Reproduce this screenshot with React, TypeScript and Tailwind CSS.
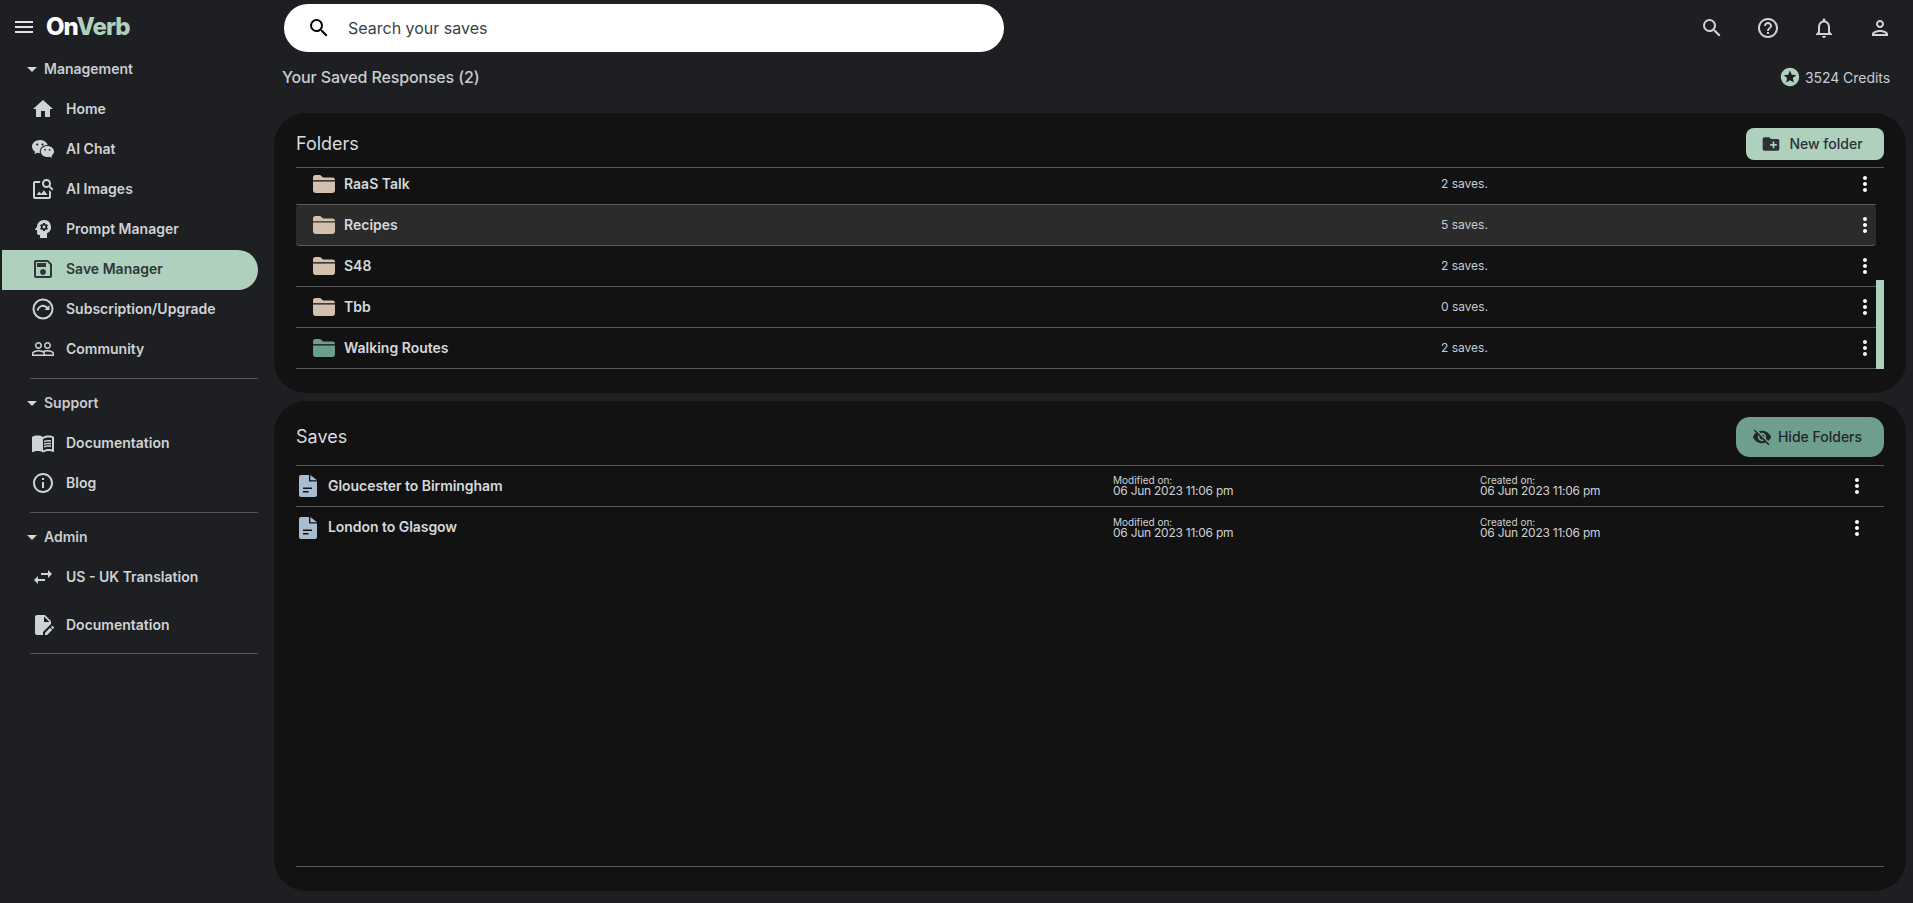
import React from 'react'
import {
  MdMenu, MdHome, MdOutlineImageSearch, MdPsychology, MdOutlineSave, MdPeopleOutline, MdMenuBook,
  MdInfoOutline, MdSwapHoriz, MdEditDocument, MdArrowDropDown, MdSearch, MdHelpOutline, MdOutlineNotifications,
  MdOutlinePerson, MdStars, MdCreateNewFolder, MdVisibilityOff, MdMoreVert,
} from 'react-icons/md'
import { RiWechatFill } from 'react-icons/ri'

const FolderIcon = ({ className }: { className: string }) => (
  <svg viewBox="0 0 22 18" className={className} fill="currentColor">
    <path d="M0 5.200V2.500A2.500 2.500 0 0 1 2.500 0h4.700l2.900 2.600h9.400A2.500 2.500 0 0 1 22 5v.2z" />
    <path d="M0 6.400h22V15a3 3 0 0 1-3 3H3a3 3 0 0 1-3-3z" />
  </svg>
)

const FileIcon = () => (
  <svg viewBox="0 0 18 22" className="w-[18px] h-[22px] text-[#a9bdd1]" fill="currentColor">
    <path d="M2 0h8v6.500h8V20a2 2 0 0 1-2 2H2a2 2 0 0 1-2-2V2a2 2 0 0 1 2-2zM4 12.500v1.600h9v-1.600zM4 16v1.600h5.500V16z" fillRule="evenodd" />
    <path d="M11.400 0 18 5.200h-6.600z" />
  </svg>
)

const UpgradeIcon = () => (
  <svg viewBox="0 0 24 24" className="w-6 h-6" fill="none" stroke="currentColor" strokeWidth="2">
    <circle cx="12" cy="12" r="9.500" />
    <path d="M6.500 13.500c1-3.500 4-5 6.500-4.600 1.800.3 3 1.200 4 2.600" />
    <path d="M18.500 8v5h-5z" fill="currentColor" stroke="none" />
  </svg>
)

type NavItem = { label: string; icon: React.ReactNode; active?: boolean; tall?: boolean }

const ic = 'w-6 h-6'

const sections: { title: string; items: NavItem[]; last?: boolean }[] = [
  {
    title: 'Management',
    items: [
      { label: 'Home', icon: <MdHome className={ic} /> },
      { label: 'AI Chat', icon: <RiWechatFill className={ic} /> },
      { label: 'AI Images', icon: <MdOutlineImageSearch className={ic} /> },
      { label: 'Prompt Manager', icon: <MdPsychology className={ic} /> },
      { label: 'Save Manager', icon: <MdOutlineSave className={ic} />, active: true },
      { label: 'Subscription/Upgrade', icon: <UpgradeIcon /> },
      { label: 'Community', icon: <MdPeopleOutline className={ic} /> },
    ],
  },
  {
    title: 'Support',
    items: [
      { label: 'Documentation', icon: <MdMenuBook className={ic} /> },
      { label: 'Blog', icon: <MdInfoOutline className={ic} /> },
    ],
  },
  {
    title: 'Admin',
    last: true,
    items: [
      { label: 'US - UK Translation', icon: <MdSwapHoriz className={ic} /> },
      { label: 'Documentation', icon: <MdEditDocument className={ic} />, tall: true },
    ],
  },
]

const folders = [
  { name: 'RaaS Talk', saves: '2 saves.' },
  { name: 'Recipes', saves: '5 saves.', hover: true },
  { name: 'S48', saves: '2 saves.' },
  { name: 'Tbb', saves: '0 saves.' },
  { name: 'Walking Routes', saves: '2 saves.', green: true },
]

const saves = ['Gloucester to Birmingham', 'London to Glasgow']

const Sidebar = () => (
  <aside className="w-[274px] shrink-0">
    <div className="h-[54px] flex items-center pl-[12px] gap-[10px]">
      <MdMenu className="w-6 h-6 text-[#e4e4e4]" />
      <div className="text-[24px] font-extrabold tracking-[-1px] leading-none">
        <span className="text-white">On</span>
        <span className="text-[#aed0bd]">Verb</span>
      </div>
    </div>
    {sections.map((s) => (
      <div key={s.title} className="pb-[9px]">
        <div className="h-[30px] flex items-center pl-[22px] pb-[1px] text-[14px] font-semibold text-[#c9ccd0]">
          <MdArrowDropDown className="w-6 h-6 -ml-[2px] text-[#d6d6d6]" />
          {s.title}
        </div>
        <div className="pt-[6px] pl-[2px] pr-[16px]">
          {s.items.map((it) => (
            <div
              key={it.label}
              className={`flex items-center pl-[29px] pb-[2px] text-[14px] font-semibold ${it.tall ? 'h-[48px] mt-[4px]' : 'h-[40px]'} ${it.active ? 'bg-[#aed0bd] text-[#30363c] rounded-r-[20px]' : 'text-[#cfd2d6]'}`}
            >
              <span className="w-[35px] shrink-0">{it.icon}</span>
              <span className="-mt-[2px]">{it.label}</span>
            </div>
          ))}
        </div>
        <div className={`${s.last ? 'mt-[3px]' : 'mt-[8px]'} ml-[30px] mr-[16px] border-b border-[#55575a]`} />
      </div>
    ))}
  </aside>
)

const TopBar = () => (
  <div className="h-[56px] flex items-center">
    <div className="ml-[10px] w-[720px] h-[48px] bg-white rounded-full flex items-center pl-[23px] text-[#3a3f47]">
      <MdSearch className="w-6 h-6 text-black" />
      <span className="ml-[17px] text-[16px]">Search your saves</span>
    </div>
    <div className="ml-auto flex items-center gap-[32px] pr-[14px] text-[#d2d4d7]">
      <MdSearch className="w-6 h-6" />
      <MdHelpOutline className="w-6 h-6" />
      <MdOutlineNotifications className="w-6 h-6" />
      <MdOutlinePerson className="w-6 h-6" />
    </div>
  </div>
)

const Kebab = () => <MdMoreVert className="w-6 h-6 text-white" />

const Folders = () => (
  <section className="h-[280px] bg-[#121212] rounded-[32px] px-[22px]">
    <div className="h-[55px] flex items-center justify-between border-b border-[#5a5a5a] pt-[8px]">
      <h2 className="text-[18px] text-[#d9dbdd] -mt-px">Folders</h2>
      <button className="w-[138px] h-[32px] bg-[#aed0bd] rounded-[8px] flex items-center justify-center gap-[8px] pr-[6px] text-[14px] font-medium text-[#2c3138]">
        <MdCreateNewFolder className="w-5 h-5" />
        <span className="-mt-[2px]">New folder</span>
      </button>
    </div>
    <div className="flex h-[201px]">
      <div className="flex-1 overflow-hidden">
        <div className="-mt-[4px]">
          {folders.map((f) => (
            <div
              key={f.name}
              className={`h-[41px] flex items-center border-b border-[#5a5a5a] ${f.hover ? 'bg-[#2b2b2b] rounded-[4px]' : ''}`}
            >
              <div className="w-[1145px] flex items-center pl-[17px]">
                <FolderIcon className={`w-[22px] h-[18px] ${f.green ? 'text-[#6b9f8a]' : 'text-[#d4c0ae]'}`} />
                <span className="ml-[9px] -mt-[2px] text-[14px] font-semibold text-[#d5d8dc]">{f.name}</span>
              </div>
              <span className="text-[12px] text-[#c9cbce]">{f.saves}</span>
              <span className="ml-auto -mr-px"><Kebab /></span>
            </div>
          ))}
        </div>
      </div>
      <div className="w-2 shrink-0 pt-[112px]">
        <div className="h-[89px] bg-[#aed0bd]" />
      </div>
    </div>
  </section>
)

const Saves = () => (
  <section className="h-[490px] mt-[8px] bg-[#121212] rounded-[32px] px-[22px] flex flex-col">
    <div className="h-[65px] flex items-center justify-between border-b border-[#5a5a5a] shrink-0 pt-[8px]">
      <h2 className="text-[18px] text-[#d9dbdd] -mt-px">Saves</h2>
      <button className="w-[148px] h-[40px] bg-[#6d9f8c] rounded-[14px] flex items-center justify-center gap-[6px] pr-[6px] text-[14px] font-medium text-[#22272b]">
        <MdVisibilityOff className="w-5 h-5" />
        <span className="-mt-[2px]">Hide Folders</span>
      </button>
    </div>
    <div className="flex-1">
      {saves.map((name, i) => (
        <div key={name} className={`h-[41px] flex items-center pr-[15px] ${i === 0 ? 'border-b border-[#5a5a5a]' : ''}`}>
          <div className="w-[817px] flex items-center pl-[3px]">
            <FileIcon />
            <span className="ml-[11px] -mt-[2px] text-[14px] font-semibold tracking-[-0.05px] text-[#d5d8dc]">{name}</span>
          </div>
          <div className="w-[367px] text-[#cfd1d4]">
            <div className="text-[10px] leading-[10px]">Modified on:</div>
            <div className="text-[12px] leading-[12px] tracking-[-0.25px]">06 Jun 2023 11:06 pm</div>
          </div>
          <div className="text-[#cfd1d4]">
            <div className="text-[10px] leading-[10px]">Created on:</div>
            <div className="text-[12px] leading-[12px] tracking-[-0.25px]">06 Jun 2023 11:06 pm</div>
          </div>
          <span className="ml-auto"><Kebab /></span>
        </div>
      ))}
    </div>
    <div className="mb-[24px] border-b border-[#5a5a5a]" />
  </section>
)

export default function App() {
  return (
    <div className="font-['Inter',sans-serif] w-full h-[903px] bg-[#1e1f22] flex overflow-hidden">
      <Sidebar />
      <main className="flex-1 pr-[7px]">
        <TopBar />
        <div className="h-[57px] flex items-center justify-between pl-[8px] pr-[16px] pb-[15px]">
          <span className="text-[16px] font-medium tracking-[-0.15px] text-[#c9ccd0]">Your Saved Responses (2)</span>
          <span className="flex items-center gap-[4px] text-[14px] tracking-[-0.05px] text-[#c9ccd0]">
            <MdStars className="w-[22px] h-[22px] text-[#aed0bd]" />
            3524 Credits
          </span>
        </div>
        <Folders />
        <Saves />
      </main>
    </div>
  )
}
